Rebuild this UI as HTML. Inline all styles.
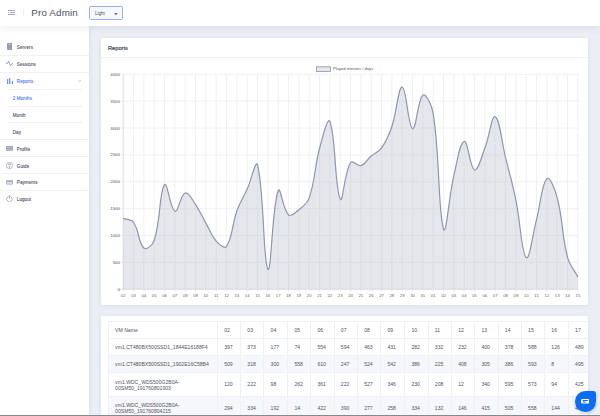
<!DOCTYPE html>
<html><head><meta charset="utf-8"><style>
*{box-sizing:border-box;margin:0;padding:0}
html,body{width:600px;height:416px;overflow:hidden}
body{background:#ebeef5;font-family:"Liberation Sans",sans-serif;position:relative;color:#3e4255}
.hdr{position:absolute;left:0;top:0;width:600px;height:25.5px;background:#fff;box-shadow:0 2px 7px rgba(40,50,80,.09);z-index:5}
.burger{position:absolute;left:8px;top:9.9px;width:7px;height:5px}
.vdiv{position:absolute;left:23.2px;top:9px;width:0.6px;height:7px;background:#eef0f4}
.brand{position:absolute;left:31.3px;top:7.2px;font-size:9.8px;letter-spacing:0.16px;color:#4c5163;white-space:nowrap;line-height:11px}
.sel{position:absolute;left:88.6px;top:6px;width:34.2px;height:13.6px;border:0.9px solid #98adf3;border-radius:1.6px;background:#f7f8fc}
.sel span{position:absolute;left:5.5px;top:3.9px;font-size:4.5px;line-height:5px;color:#4a4e5e}
.sel i{position:absolute;left:25.6px;top:5.6px;width:0;height:0;border-left:1.6px solid transparent;border-right:1.6px solid transparent;border-top:1.8px solid #555a6a}
.side{position:absolute;left:0;top:0;width:89px;height:416px;background:#fff;box-shadow:1px 0 3px rgba(40,50,80,.08);z-index:2}
.it{position:absolute;left:0;width:89px;height:17px;font-size:4.5px;color:#50546a;letter-spacing:0.1px;-webkit-text-stroke:0.1px #50546a}
.it span{position:absolute;left:16.8px;top:6.8px;line-height:5px}
.it.sub span{left:12.7px}
.it.act{color:#4d7af2;-webkit-text-stroke:0.1px #4d7af2}
.ic{position:absolute}
.ln{position:absolute;height:0.6px;background:#f0f1f6}
.card{position:absolute;left:101.3px;width:286.7px;background:#fff;box-shadow:0 1px 5px rgba(30,40,90,.08)}
.c1{top:38.3px;height:267.2px;width:486.8px}
.c1 h3{position:absolute;left:7px;top:45.2px;font-size:5.7px;font-weight:normal;color:#3f4356}
.c1h{position:absolute;left:108px;top:44.6px;font-size:5.7px;line-height:7px;color:#3a3f55;-webkit-text-stroke:0.18px #3a3f55;z-index:4}
.c1l{position:absolute;left:101.3px;top:57.3px;width:486.8px;height:0.6px;background:#f1f2f6;z-index:4}
.c2{top:316px;height:130px;width:486.8px;overflow:hidden}
.chart{position:absolute;left:0;top:0}
.tbl{position:absolute;left:0;top:0;width:588.1px;height:416px;overflow:hidden;z-index:3}
.tb{position:absolute;background:#f6f7fb}
.th{position:absolute;height:0.6px;background:#f0f1f6}
.tv{position:absolute;width:0.6px;background:#f0f1f6}
.tt{position:absolute;font-size:5.1px;line-height:6.6px;color:#505466;white-space:nowrap}
.chat{position:absolute;left:574.5px;top:390.8px;width:21px;height:21px;background:#0b6cf4;border-radius:50% 3px 50% 50%;z-index:9;box-shadow:0 1px 3px rgba(0,40,120,.25)}
.bot{position:absolute;left:0;top:415px;width:600px;height:1px;background:#87888b;z-index:10}
</style></head><body>
<div class="hdr">
 <svg class="burger" viewBox="0 0 14 10" width="7" height="5"><g stroke="#6f7a96" stroke-width="1.3"><line x1="0" y1="1" x2="14" y2="1"/><line x1="0" y1="5" x2="1.4" y2="5"/><line x1="3.4" y1="5" x2="14" y2="5"/><line x1="0" y1="9" x2="14" y2="9"/></g></svg>
 <div class="vdiv"></div>
 <div class="brand">Pro Admin</div>
 <div class="sel"><span>Light</span><svg style="position:absolute;left:24.8px;top:5.5px" width="3.8" height="2.2" viewBox="0 0 38 22"><path d="M0 0 L38 0 L19 22 Z" fill="#666b7c"/></svg></div>
</div>
<div class="side">

 <div class="it" style="top:38px"><span>Servers</span></div>
 <svg class="ic" style="left:6.9px;top:42.9px" width="5.3" height="6.9" viewBox="0 0 53 69"><rect x="0" y="0" width="53" height="69" rx="8" fill="#8e9ab6"/><rect x="13" y="13" width="27" height="7" rx="3.5" fill="#c9d0e0"/><circle cx="26.5" cy="53" r="5.5" fill="#c9d0e0"/></svg>
 <div class="ln" style="top:55.3px;left:0;width:89px"></div>
 <div class="it" style="top:55.2px"><span>Sessions</span></div>
 <svg class="ic" style="left:6px;top:60px" width="7" height="7" viewBox="0 0 70 70"><path d="M2 34 L15 32 L26 12 L45 59 L67 33" fill="none" stroke="#8891ab" stroke-width="8.5" stroke-linejoin="round" stroke-linecap="round"/></svg>
 <div class="ln" style="top:72.3px;left:0;width:89px"></div>
 <div class="it act" style="top:72.5px"><span>Reports</span></div>
 <svg class="ic" style="left:6.8px;top:77.8px" width="6.2" height="6.2" viewBox="0 0 62 62"><g fill="#5b88f4"><rect x="1" y="11" width="11" height="51" rx="3"/><rect x="21" y="1" width="12" height="61" rx="3"/><rect x="48" y="30" width="12" height="32" rx="3"/></g></svg>
 <svg class="ic" style="left:78px;top:80px" width="3.4" height="1.8" viewBox="0 0 34 18"><path d="M3 3 L17 15 L31 3" fill="none" stroke="#9aa0b2" stroke-width="5" stroke-linecap="round" stroke-linejoin="round"/></svg>
 <div class="ln" style="top:88.8px;left:6.7px;width:75.5px"></div>
 <div class="it sub act" style="top:89.3px"><span>2 Months</span></div>
 <div class="ln" style="top:105.5px;left:6.7px;width:75.5px"></div>
 <div class="it sub" style="top:106.3px"><span>Month</span></div>
 <div class="ln" style="top:122.1px;left:6.7px;width:75.5px"></div>
 <div class="it sub" style="top:123px"><span>Day</span></div>
 <div class="ln" style="top:139px;left:0;width:89px"></div>
 <div class="it" style="top:139.8px"><span>Profile</span></div>
 <svg class="ic" style="left:6px;top:145.9px" width="7.2" height="4.8" viewBox="0 0 72 48"><rect x="0" y="0" width="72" height="48" rx="5" fill="#9ba6c0"/><rect x="8" y="14" width="56" height="5" fill="#d5d9e6"/><rect x="8" y="30" width="24" height="5" fill="#d5d9e6"/><rect x="40" y="30" width="24" height="5" fill="#d5d9e6"/></svg>
 <div class="ln" style="top:156.3px;left:0;width:89px"></div>
 <div class="it" style="top:156.8px"><span>Guide</span></div>
 <svg class="ic" style="left:6px;top:161.8px" width="7" height="7" viewBox="0 0 70 70"><circle cx="35" cy="35" r="31" fill="none" stroke="#7d88a6" stroke-width="6"/><path d="M25 28 Q25 17 35 17 Q45 17 45 27 Q45 34 37 38 Q35 40 35 46" fill="none" stroke="#7d88a6" stroke-width="7" stroke-linecap="round"/><circle cx="35" cy="55" r="4.5" fill="#7d88a6"/></svg>
 <div class="ln" style="top:173.1px;left:0;width:89px"></div>
 <div class="it" style="top:173.7px"><span>Payments</span></div>
 <svg class="ic" style="left:6.2px;top:180.2px" width="6.9" height="4.5" viewBox="0 0 69 45"><rect x="3" y="3" width="63" height="39" rx="5" fill="#dfe2ec" stroke="#8893b0" stroke-width="6"/><rect x="3" y="12" width="63" height="7" fill="#8893b0"/></svg>
 <div class="ln" style="top:189.9px;left:0;width:89px"></div>
 <div class="it" style="top:190.6px"><span>Logout</span></div>
 <svg class="ic" style="left:6.1px;top:195.2px" width="6.8" height="7.2" viewBox="0 0 68 72"><path d="M21 16 A28 28 0 1 0 47 16" fill="none" stroke="#7d88a6" stroke-width="6.5" stroke-linecap="round"/><line x1="34" y1="4" x2="34" y2="36" stroke="#7d88a6" stroke-width="6.5" stroke-linecap="round"/></svg>
</div>
<div class="card c1"></div><div class="c1h">Reports</div><div class="c1l"></div>
<svg class="chart" style="z-index:3" width="600" height="416" viewBox="0 0 600 416">
<g stroke="#e2e3e8" stroke-width="0.5"><line x1="119" y1="74.30" x2="577.90" y2="74.30"/><line x1="119" y1="101.17" x2="577.90" y2="101.17"/><line x1="119" y1="128.05" x2="577.90" y2="128.05"/><line x1="119" y1="154.93" x2="577.90" y2="154.93"/><line x1="119" y1="181.80" x2="577.90" y2="181.80"/><line x1="119" y1="208.68" x2="577.90" y2="208.68"/><line x1="119" y1="235.55" x2="577.90" y2="235.55"/><line x1="119" y1="262.43" x2="577.90" y2="262.43"/><line x1="119" y1="289.30" x2="577.90" y2="289.30"/><line x1="123.20" y1="74.30" x2="123.20" y2="292.80"/><line x1="133.53" y1="74.30" x2="133.53" y2="292.80"/><line x1="143.87" y1="74.30" x2="143.87" y2="292.80"/><line x1="154.20" y1="74.30" x2="154.20" y2="292.80"/><line x1="164.54" y1="74.30" x2="164.54" y2="292.80"/><line x1="174.87" y1="74.30" x2="174.87" y2="292.80"/><line x1="185.20" y1="74.30" x2="185.20" y2="292.80"/><line x1="195.54" y1="74.30" x2="195.54" y2="292.80"/><line x1="205.87" y1="74.30" x2="205.87" y2="292.80"/><line x1="216.21" y1="74.30" x2="216.21" y2="292.80"/><line x1="226.54" y1="74.30" x2="226.54" y2="292.80"/><line x1="236.88" y1="74.30" x2="236.88" y2="292.80"/><line x1="247.21" y1="74.30" x2="247.21" y2="292.80"/><line x1="257.54" y1="74.30" x2="257.54" y2="292.80"/><line x1="267.88" y1="74.30" x2="267.88" y2="292.80"/><line x1="278.21" y1="74.30" x2="278.21" y2="292.80"/><line x1="288.55" y1="74.30" x2="288.55" y2="292.80"/><line x1="298.88" y1="74.30" x2="298.88" y2="292.80"/><line x1="309.21" y1="74.30" x2="309.21" y2="292.80"/><line x1="319.55" y1="74.30" x2="319.55" y2="292.80"/><line x1="329.88" y1="74.30" x2="329.88" y2="292.80"/><line x1="340.22" y1="74.30" x2="340.22" y2="292.80"/><line x1="350.55" y1="74.30" x2="350.55" y2="292.80"/><line x1="360.88" y1="74.30" x2="360.88" y2="292.80"/><line x1="371.22" y1="74.30" x2="371.22" y2="292.80"/><line x1="381.55" y1="74.30" x2="381.55" y2="292.80"/><line x1="391.89" y1="74.30" x2="391.89" y2="292.80"/><line x1="402.22" y1="74.30" x2="402.22" y2="292.80"/><line x1="412.55" y1="74.30" x2="412.55" y2="292.80"/><line x1="422.89" y1="74.30" x2="422.89" y2="292.80"/><line x1="433.22" y1="74.30" x2="433.22" y2="292.80"/><line x1="443.56" y1="74.30" x2="443.56" y2="292.80"/><line x1="453.89" y1="74.30" x2="453.89" y2="292.80"/><line x1="464.22" y1="74.30" x2="464.22" y2="292.80"/><line x1="474.56" y1="74.30" x2="474.56" y2="292.80"/><line x1="484.89" y1="74.30" x2="484.89" y2="292.80"/><line x1="495.23" y1="74.30" x2="495.23" y2="292.80"/><line x1="505.56" y1="74.30" x2="505.56" y2="292.80"/><line x1="515.90" y1="74.30" x2="515.90" y2="292.80"/><line x1="526.23" y1="74.30" x2="526.23" y2="292.80"/><line x1="536.56" y1="74.30" x2="536.56" y2="292.80"/><line x1="546.90" y1="74.30" x2="546.90" y2="292.80"/><line x1="557.23" y1="74.30" x2="557.23" y2="292.80"/><line x1="567.57" y1="74.30" x2="567.57" y2="292.80"/><line x1="577.90" y1="74.30" x2="577.90" y2="292.80"/></g>
<line x1="123.2" y1="74.3" x2="123.2" y2="289.3" stroke="#d4d5da" stroke-width="0.6"/>
<line x1="119" y1="289.3" x2="577.9" y2="289.3" stroke="#d4d5da" stroke-width="0.6"/>
<path d="M123.20 218.35 C127.33 219.92 131.18 218.89 133.53 222.27 C139.45 230.78 138.21 243.09 143.87 248.07 C146.48 250.37 152.68 245.17 154.20 240.50 C160.95 219.80 159.03 192.45 164.54 184.65 C167.30 180.73 170.10 209.27 174.87 211.20 C178.37 212.62 180.45 194.57 185.20 193.03 C188.72 191.90 192.05 199.47 195.54 204.54 C200.32 211.49 201.69 215.69 205.87 223.08 C209.96 230.31 210.91 235.10 216.21 241.09 C219.17 244.44 224.57 249.30 226.54 246.41 C232.83 237.19 231.86 224.72 236.88 210.83 C240.13 201.80 243.25 197.88 247.21 189.11 C251.52 179.56 255.89 158.61 257.54 165.03 C264.16 190.69 263.18 263.51 267.88 269.31 C271.44 273.70 272.02 206.78 278.21 190.51 C280.28 185.06 282.79 209.66 288.55 215.02 C291.06 217.35 295.37 212.65 298.88 209.75 C303.63 205.82 307.25 203.74 309.21 197.93 C315.52 179.23 314.28 167.92 319.55 148.47 C322.55 137.39 327.65 116.16 329.88 121.60 C335.92 136.37 334.65 188.01 340.22 199.00 C342.92 204.35 344.12 172.82 350.55 162.45 C352.38 159.49 357.30 166.79 360.88 165.68 C365.57 164.21 366.93 159.68 371.22 156.00 C375.19 152.59 378.62 152.13 381.55 147.94 C386.89 140.31 388.83 135.43 391.89 126.44 C397.09 111.14 398.19 86.78 402.22 87.20 C406.46 87.64 408.01 126.81 412.55 128.59 C416.27 130.04 417.73 99.02 422.89 95.26 C425.99 93.00 431.96 105.33 433.22 113.54 C440.22 158.87 437.94 212.30 443.56 229.10 C446.21 237.03 448.87 196.63 453.89 175.35 C457.14 161.59 459.77 142.65 464.22 141.49 C468.04 140.50 469.97 168.54 474.56 169.97 C478.24 171.12 481.37 157.00 484.89 147.94 C489.64 135.71 491.61 115.07 495.23 116.76 C499.87 118.94 501.50 141.25 505.56 157.61 C509.77 174.58 512.36 182.96 515.90 200.08 C520.63 222.95 521.30 252.97 526.23 257.59 C529.57 260.71 532.56 234.72 536.56 219.43 C540.83 203.12 541.46 184.23 546.90 178.57 C549.73 175.63 555.03 189.52 557.23 197.93 C563.29 221.02 561.52 234.21 567.57 257.32 C569.79 265.82 573.77 269.09 577.90 276.94 L577.90 289.30 L123.20 289.30 Z" fill="rgba(190,195,210,0.4)"/>
<path d="M123.20 218.35 C127.33 219.92 131.18 218.89 133.53 222.27 C139.45 230.78 138.21 243.09 143.87 248.07 C146.48 250.37 152.68 245.17 154.20 240.50 C160.95 219.80 159.03 192.45 164.54 184.65 C167.30 180.73 170.10 209.27 174.87 211.20 C178.37 212.62 180.45 194.57 185.20 193.03 C188.72 191.90 192.05 199.47 195.54 204.54 C200.32 211.49 201.69 215.69 205.87 223.08 C209.96 230.31 210.91 235.10 216.21 241.09 C219.17 244.44 224.57 249.30 226.54 246.41 C232.83 237.19 231.86 224.72 236.88 210.83 C240.13 201.80 243.25 197.88 247.21 189.11 C251.52 179.56 255.89 158.61 257.54 165.03 C264.16 190.69 263.18 263.51 267.88 269.31 C271.44 273.70 272.02 206.78 278.21 190.51 C280.28 185.06 282.79 209.66 288.55 215.02 C291.06 217.35 295.37 212.65 298.88 209.75 C303.63 205.82 307.25 203.74 309.21 197.93 C315.52 179.23 314.28 167.92 319.55 148.47 C322.55 137.39 327.65 116.16 329.88 121.60 C335.92 136.37 334.65 188.01 340.22 199.00 C342.92 204.35 344.12 172.82 350.55 162.45 C352.38 159.49 357.30 166.79 360.88 165.68 C365.57 164.21 366.93 159.68 371.22 156.00 C375.19 152.59 378.62 152.13 381.55 147.94 C386.89 140.31 388.83 135.43 391.89 126.44 C397.09 111.14 398.19 86.78 402.22 87.20 C406.46 87.64 408.01 126.81 412.55 128.59 C416.27 130.04 417.73 99.02 422.89 95.26 C425.99 93.00 431.96 105.33 433.22 113.54 C440.22 158.87 437.94 212.30 443.56 229.10 C446.21 237.03 448.87 196.63 453.89 175.35 C457.14 161.59 459.77 142.65 464.22 141.49 C468.04 140.50 469.97 168.54 474.56 169.97 C478.24 171.12 481.37 157.00 484.89 147.94 C489.64 135.71 491.61 115.07 495.23 116.76 C499.87 118.94 501.50 141.25 505.56 157.61 C509.77 174.58 512.36 182.96 515.90 200.08 C520.63 222.95 521.30 252.97 526.23 257.59 C529.57 260.71 532.56 234.72 536.56 219.43 C540.83 203.12 541.46 184.23 546.90 178.57 C549.73 175.63 555.03 189.52 557.23 197.93 C563.29 221.02 561.52 234.21 567.57 257.32 C569.79 265.82 573.77 269.09 577.90 276.94" fill="none" stroke="#8d96ae" stroke-width="1.2"/>
<g font-family="Liberation Sans" font-size="4.4" fill="#555" text-anchor="end"><text x="120" y="75.80">4000</text><text x="120" y="102.67">3500</text><text x="120" y="129.55">3000</text><text x="120" y="156.43">2500</text><text x="120" y="183.30">2000</text><text x="120" y="210.18">1500</text><text x="120" y="237.05">1000</text><text x="120" y="263.93">500</text><text x="120" y="290.80">0</text></g>
<g font-family="Liberation Sans" font-size="4.3" fill="#666" text-anchor="middle"><text x="123.20" y="296.6">02</text><text x="133.53" y="296.6">03</text><text x="143.87" y="296.6">04</text><text x="154.20" y="296.6">05</text><text x="164.54" y="296.6">06</text><text x="174.87" y="296.6">07</text><text x="185.20" y="296.6">08</text><text x="195.54" y="296.6">09</text><text x="205.87" y="296.6">10</text><text x="216.21" y="296.6">11</text><text x="226.54" y="296.6">12</text><text x="236.88" y="296.6">13</text><text x="247.21" y="296.6">14</text><text x="257.54" y="296.6">15</text><text x="267.88" y="296.6">16</text><text x="278.21" y="296.6">17</text><text x="288.55" y="296.6">18</text><text x="298.88" y="296.6">19</text><text x="309.21" y="296.6">20</text><text x="319.55" y="296.6">21</text><text x="329.88" y="296.6">22</text><text x="340.22" y="296.6">23</text><text x="350.55" y="296.6">24</text><text x="360.88" y="296.6">25</text><text x="371.22" y="296.6">26</text><text x="381.55" y="296.6">27</text><text x="391.89" y="296.6">28</text><text x="402.22" y="296.6">29</text><text x="412.55" y="296.6">30</text><text x="422.89" y="296.6">31</text><text x="433.22" y="296.6">01</text><text x="443.56" y="296.6">02</text><text x="453.89" y="296.6">03</text><text x="464.22" y="296.6">04</text><text x="474.56" y="296.6">05</text><text x="484.89" y="296.6">06</text><text x="495.23" y="296.6">07</text><text x="505.56" y="296.6">08</text><text x="515.90" y="296.6">09</text><text x="526.23" y="296.6">10</text><text x="536.56" y="296.6">11</text><text x="546.90" y="296.6">12</text><text x="557.23" y="296.6">13</text><text x="567.57" y="296.6">14</text><text x="577.90" y="296.6">15</text></g>
<rect x="316.5" y="66.8" width="14" height="4.6" fill="rgba(190,195,210,0.4)" stroke="#7d87a0" stroke-width="0.7"/>
<text x="333" y="70.1" font-family="Liberation Sans" font-size="4.1" fill="#555">Played minutes / days</text>
</svg>
<div class="card c2"></div><div class="tbl"><div class="tb" style="left:108.40px;top:355.00px;width:491.60px;height:17.70px"></div><div class="tb" style="left:108.40px;top:395.80px;width:491.60px;height:23.20px"></div><div class="th" style="left:108.40px;top:321.10px;width:491.60px"></div><div class="th" style="left:108.40px;top:337.70px;width:491.60px"></div><div class="th" style="left:108.40px;top:354.70px;width:491.60px"></div><div class="th" style="left:108.40px;top:372.40px;width:491.60px"></div><div class="th" style="left:108.40px;top:395.50px;width:491.60px"></div><div class="tv" style="left:108.10px;top:321.40px;height:100.00px"></div><div class="tv" style="left:217.10px;top:321.40px;height:100.00px"></div><div class="tv" style="left:240.20px;top:321.40px;height:100.00px"></div><div class="tv" style="left:263.45px;top:321.40px;height:100.00px"></div><div class="tv" style="left:287.30px;top:321.40px;height:100.00px"></div><div class="tv" style="left:310.30px;top:321.40px;height:100.00px"></div><div class="tv" style="left:333.70px;top:321.40px;height:100.00px"></div><div class="tv" style="left:357.10px;top:321.40px;height:100.00px"></div><div class="tv" style="left:380.30px;top:321.40px;height:100.00px"></div><div class="tv" style="left:404.30px;top:321.40px;height:100.00px"></div><div class="tv" style="left:427.70px;top:321.40px;height:100.00px"></div><div class="tv" style="left:451.10px;top:321.40px;height:100.00px"></div><div class="tv" style="left:474.30px;top:321.40px;height:100.00px"></div><div class="tv" style="left:497.70px;top:321.40px;height:100.00px"></div><div class="tv" style="left:521.00px;top:321.40px;height:100.00px"></div><div class="tv" style="left:544.20px;top:321.40px;height:100.00px"></div><div class="tv" style="left:568.00px;top:321.40px;height:100.00px"></div><div class="tv" style="left:591.40px;top:321.40px;height:100.00px"></div><div class="tv" style="left:614.70px;top:321.40px;height:100.00px"></div><div class="tt" style="left:115.10px;top:327.20px">VM Name</div><div class="tt" style="left:224.20px;top:327.20px">02</div><div class="tt" style="left:247.30px;top:327.20px">03</div><div class="tt" style="left:270.55px;top:327.20px">04</div><div class="tt" style="left:294.40px;top:327.20px">05</div><div class="tt" style="left:317.40px;top:327.20px">06</div><div class="tt" style="left:340.80px;top:327.20px">07</div><div class="tt" style="left:364.20px;top:327.20px">08</div><div class="tt" style="left:387.40px;top:327.20px">09</div><div class="tt" style="left:411.40px;top:327.20px">10</div><div class="tt" style="left:434.80px;top:327.20px">11</div><div class="tt" style="left:458.20px;top:327.20px">12</div><div class="tt" style="left:481.40px;top:327.20px">13</div><div class="tt" style="left:504.80px;top:327.20px">14</div><div class="tt" style="left:528.10px;top:327.20px">15</div><div class="tt" style="left:551.30px;top:327.20px">16</div><div class="tt" style="left:575.10px;top:327.20px">17</div><div class="tt" style="left:598.50px;top:327.20px">18</div><div class="tt" style="left:115.10px;top:344.25px;line-height:6.1px">vm1.CT480BX500SSD1_1844E16188F4</div><div class="tt" style="left:224.20px;top:344.00px">397</div><div class="tt" style="left:247.30px;top:344.00px">373</div><div class="tt" style="left:270.55px;top:344.00px">177</div><div class="tt" style="left:294.40px;top:344.00px">74</div><div class="tt" style="left:317.40px;top:344.00px">554</div><div class="tt" style="left:340.80px;top:344.00px">594</div><div class="tt" style="left:364.20px;top:344.00px">463</div><div class="tt" style="left:387.40px;top:344.00px">431</div><div class="tt" style="left:411.40px;top:344.00px">282</div><div class="tt" style="left:434.80px;top:344.00px">332</div><div class="tt" style="left:458.20px;top:344.00px">232</div><div class="tt" style="left:481.40px;top:344.00px">400</div><div class="tt" style="left:504.80px;top:344.00px">378</div><div class="tt" style="left:528.10px;top:344.00px">588</div><div class="tt" style="left:551.30px;top:344.00px">126</div><div class="tt" style="left:575.10px;top:344.00px">489</div><div class="tt" style="left:598.50px;top:344.00px">0</div><div class="tt" style="left:115.10px;top:361.30px;line-height:6.1px">vm1.CT480BX500SSD1_1902E16C58B4</div><div class="tt" style="left:224.20px;top:361.05px">509</div><div class="tt" style="left:247.30px;top:361.05px">318</div><div class="tt" style="left:270.55px;top:361.05px">300</div><div class="tt" style="left:294.40px;top:361.05px">558</div><div class="tt" style="left:317.40px;top:361.05px">610</div><div class="tt" style="left:340.80px;top:361.05px">247</div><div class="tt" style="left:364.20px;top:361.05px">524</div><div class="tt" style="left:387.40px;top:361.05px">542</div><div class="tt" style="left:411.40px;top:361.05px">386</div><div class="tt" style="left:434.80px;top:361.05px">225</div><div class="tt" style="left:458.20px;top:361.05px">408</div><div class="tt" style="left:481.40px;top:361.05px">305</div><div class="tt" style="left:504.80px;top:361.05px">386</div><div class="tt" style="left:528.10px;top:361.05px">593</div><div class="tt" style="left:551.30px;top:361.05px">8</div><div class="tt" style="left:575.10px;top:361.05px">495</div><div class="tt" style="left:598.50px;top:361.05px">0</div><div class="tt" style="left:115.10px;top:378.65px;line-height:6.1px">vm1.WDC_WDS500G2B0A-<br>00SM50_191760801903</div><div class="tt" style="left:224.20px;top:381.45px">120</div><div class="tt" style="left:247.30px;top:381.45px">222</div><div class="tt" style="left:270.55px;top:381.45px">98</div><div class="tt" style="left:294.40px;top:381.45px">262</div><div class="tt" style="left:317.40px;top:381.45px">361</div><div class="tt" style="left:340.80px;top:381.45px">222</div><div class="tt" style="left:364.20px;top:381.45px">527</div><div class="tt" style="left:387.40px;top:381.45px">346</div><div class="tt" style="left:411.40px;top:381.45px">230</div><div class="tt" style="left:434.80px;top:381.45px">208</div><div class="tt" style="left:458.20px;top:381.45px">12</div><div class="tt" style="left:481.40px;top:381.45px">340</div><div class="tt" style="left:504.80px;top:381.45px">595</div><div class="tt" style="left:528.10px;top:381.45px">573</div><div class="tt" style="left:551.30px;top:381.45px">94</div><div class="tt" style="left:575.10px;top:381.45px">425</div><div class="tt" style="left:598.50px;top:381.45px">0</div><div class="tt" style="left:115.10px;top:402.10px;line-height:6.1px">vm1.WDC_WDS500G2B0A-<br>00SM50_191760804215</div><div class="tt" style="left:224.20px;top:404.90px">294</div><div class="tt" style="left:247.30px;top:404.90px">334</div><div class="tt" style="left:270.55px;top:404.90px">192</div><div class="tt" style="left:294.40px;top:404.90px">14</div><div class="tt" style="left:317.40px;top:404.90px">422</div><div class="tt" style="left:340.80px;top:404.90px">390</div><div class="tt" style="left:364.20px;top:404.90px">277</div><div class="tt" style="left:387.40px;top:404.90px">258</div><div class="tt" style="left:411.40px;top:404.90px">334</div><div class="tt" style="left:434.80px;top:404.90px">132</div><div class="tt" style="left:458.20px;top:404.90px">146</div><div class="tt" style="left:481.40px;top:404.90px">415</div><div class="tt" style="left:504.80px;top:404.90px">505</div><div class="tt" style="left:528.10px;top:404.90px">558</div><div class="tt" style="left:551.30px;top:404.90px">144</div><div class="tt" style="left:575.10px;top:404.90px">429</div><div class="tt" style="left:598.50px;top:404.90px">0</div></div>
<div class="chat"><svg style="position:absolute;left:6.3px;top:8.4px" width="8.5" height="4.6" viewBox="0 0 85 46"><rect x="0" y="0" width="85" height="46" rx="14" fill="#fff"/><rect x="15" y="10" width="56" height="9" rx="4.5" fill="#0b6cf4"/><rect x="15" y="25" width="34" height="9" rx="4.5" fill="#0b6cf4"/></svg></div>
<div class="bot"></div>
</body></html>
